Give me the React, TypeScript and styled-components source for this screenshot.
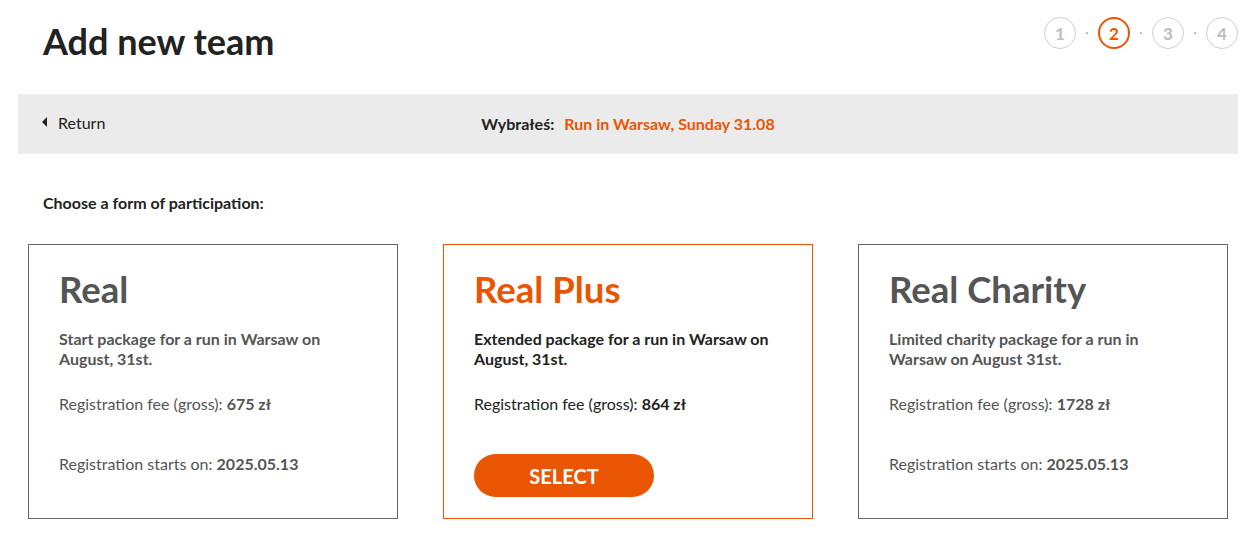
import React from "react";
import styled, { createGlobalStyle } from "styled-components";

const ORANGE = "#ea5504";

const Global = createGlobalStyle`
  html, body { margin: 0; padding: 0; background: #fff; }
  body { font-family: Lato, "Open Sans", sans-serif; color: #222; }
  * { box-sizing: border-box; }
`;

const Page = styled.div`
  padding: 0 20px 0 18px;
`;

const Header = styled.header`
  display: flex;
  justify-content: space-between;
  align-items: flex-start;
  padding: 17px 0 0 25px;
  height: 94px;
`;

const Title = styled.h1`
  margin: 0;
  font-size: 36px;
  line-height: 48px;
  font-weight: 700;
  color: #222;
`;

const Steps = styled.ol`
  display: flex;
  align-items: center;
  list-style: none;
  margin: 0;
  padding: 0;
`;

const Step = styled.li<{ $active?: boolean }>`
  width: 32px;
  height: 32px;
  border-radius: 50%;
  border: ${(p) => (p.$active ? `2.5px solid ${ORANGE}` : "1.5px solid #cfcfcf")};
  color: ${(p) => (p.$active ? ORANGE : "#bdbdbd")};
  display: flex;
  align-items: center;
  justify-content: center;
  font-size: 17px;
  font-weight: 700;
`;

const Dot = styled.li`
  width: 22px;
  text-align: center;
  color: #999;
  font-size: 12px;
  line-height: 1;
`;

const Bar = styled.div`
  display: grid;
  grid-template-columns: 1fr auto 1fr;
  align-items: center;
  height: 60px;
  background: #ebebeb;
  padding: 0 24px;
  font-size: 16px;
`;

const ReturnLink = styled.a`
  display: flex;
  align-items: center;
  gap: 11px;
  color: #222;
  text-decoration: none;
  cursor: pointer;
  margin-top: -4px;
`;

const Arrow = styled.span`
  width: 0;
  height: 0;
  border-top: 5px solid transparent;
  border-bottom: 5px solid transparent;
  border-right: 5px solid #222;
`;

const Chosen = styled.div`
  display: flex;
  gap: 10px;
  font-weight: 700;
  margin-top: -2px;
`;

const ChosenLabel = styled.span`
  color: #222;
`;

const ChosenValue = styled.span`
  color: ${ORANGE};
`;

const Section = styled.section`
  padding: 39px 0 0 0;
`;

const Lead = styled.p`
  margin: 0 0 31px 25px;
  font-size: 16px;
  line-height: 20px;
  font-weight: 700;
  color: #222;
`;

const Cards = styled.div`
  display: grid;
  grid-template-columns: repeat(3, 370px);
  gap: 45px;
  padding: 0 10px;
`;

const Card = styled.div<{ $active?: boolean }>`
  display: flex;
  flex-direction: column;
  border: 1px solid ${(p) => (p.$active ? ORANGE : "#666")};
  padding: 23px 40px 21px 30px;
  min-height: 275px;
  color: ${(p) => (p.$active ? "#222" : "#555")};
`;

const CardTitle = styled.h2<{ $active?: boolean }>`
  margin: 0 0 18px;
  font-size: 36.5px;
  line-height: 43px;
  font-weight: 700;
  color: ${(p) => (p.$active ? ORANGE : "#555")};
`;

const Desc = styled.p`
  margin: 0 0 25px;
  font-size: 16px;
  line-height: 20px;
  font-weight: 700;
`;

const Info = styled.p<{ $gap?: number }>`
  margin: 0 0 ${(p) => p.$gap ?? 0}px;
  font-size: 16px;
  line-height: 20px;
  font-weight: 400;
  b { font-weight: 700; }
`;

const SelectButton = styled.button`
  width: 180px;
  height: 43px;
  border: none;
  border-radius: 22px;
  background: ${ORANGE};
  color: #fff;
  font-family: Lato, sans-serif;
  font-size: 20px;
  font-weight: 700;
  cursor: pointer;
`;

type Pkg = {
  name: string;
  desc: string;
  fee: string;
  active?: boolean;
};

const packages: Pkg[] = [
  { name: "Real", desc: "Start package for a run in Warsaw on August, 31st.", fee: "675 zł" },
  { name: "Real Plus", desc: "Extended package for a run in Warsaw on August, 31st.", fee: "864 zł", active: true },
  { name: "Real Charity", desc: "Limited charity package for a run in Warsaw on August 31st.", fee: "1728 zł" },
];

export default function App() {
  return (
    <>
      <Global />
      <Page>
        <Header>
          <Title>Add new team</Title>
          <Steps>
            <Step>1</Step>
            <Dot>·</Dot>
            <Step $active>2</Step>
            <Dot>·</Dot>
            <Step>3</Step>
            <Dot>·</Dot>
            <Step>4</Step>
          </Steps>
        </Header>
        <Bar>
          <ReturnLink>
            <Arrow />
            Return
          </ReturnLink>
          <Chosen>
            <ChosenLabel>Wybrałeś:</ChosenLabel>
            <ChosenValue>Run in Warsaw, Sunday 31.08</ChosenValue>
          </Chosen>
          <span />
        </Bar>
        <Section>
          <Lead>Choose a form of participation:</Lead>
          <Cards>
            {packages.map((p) => (
              <Card key={p.name} $active={p.active}>
                <CardTitle $active={p.active}>{p.name}</CardTitle>
                <Desc>{p.desc}</Desc>
                <Info $gap={40}>
                  Registration fee (gross): <b>{p.fee}</b>
                </Info>
                {p.active ? (
                  <SelectButton>SELECT</SelectButton>
                ) : (
                  <Info>
                    Registration starts on: <b>2025.05.13</b>
                  </Info>
                )}
              </Card>
            ))}
          </Cards>
        </Section>
      </Page>
    </>
  );
}
